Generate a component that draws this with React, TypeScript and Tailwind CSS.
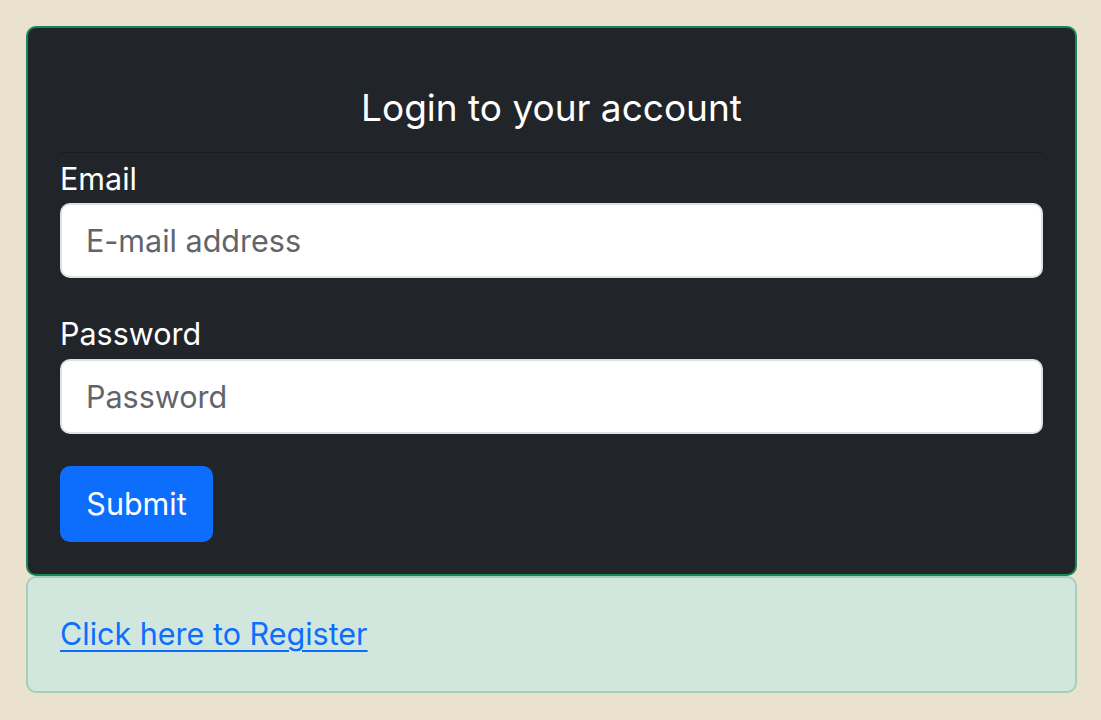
export default function App() {
    return (
        <div className="min-h-screen w-full bg-[#eae2cf] pl-[26px] pr-[24px] pt-[26px] font-['Inter','Noto_Sans',sans-serif]">
            {/* Login card */}
            <div className="rounded-[10px] border-2 border-[#198754] bg-[#212529] px-[32px] pb-[32px]">
                <div className="border-b border-[#1a1d20] pt-[58px] pb-[23px] text-center">
                    <h3 className="text-[37px] leading-[43px] text-white">Login to your account</h3>
                </div>

                <form onSubmit={(e) => e.preventDefault()}>
                    <label className="mt-[8px] block text-[30.5px] leading-[36px] text-white">Email</label>
                    <input
                        type="email"
                        placeholder="E-mail address"
                        className="mt-[6px] block h-[75px] w-full rounded-[10px] border-2 border-[#dee2e6] bg-white px-[24px] text-[30.5px] text-[#212529] placeholder:text-[#5f656b] outline-none"
                    />

                    <label className="mt-[38px] block text-[30.5px] leading-[36px] text-white">Password</label>
                    <input
                        type="password"
                        placeholder="Password"
                        className="mt-[7px] block h-[75px] w-full rounded-[10px] border-2 border-[#dee2e6] bg-white px-[24px] text-[30.5px] text-[#212529] placeholder:text-[#5f656b] outline-none"
                    />

                    <button
                        type="submit"
                        className="mt-[32px] flex h-[76px] w-[153px] items-center justify-center rounded-[10px] bg-[#0d6efd] text-[30.5px] text-white"
                    >
                        Submit
                    </button>
                </form>
            </div>

            {/* Register card */}
            <div className="rounded-[10px] border-2 border-[#a3cfbb] bg-[#d1e7dd] px-[32px] pt-[38px] pb-[39px]">
                <a href="#" className="text-[30.5px] leading-[36px] text-[#0d6efd] underline decoration-2 underline-offset-[5px]">
                    Click here to Register
                </a>
            </div>
        </div>
    );
}
